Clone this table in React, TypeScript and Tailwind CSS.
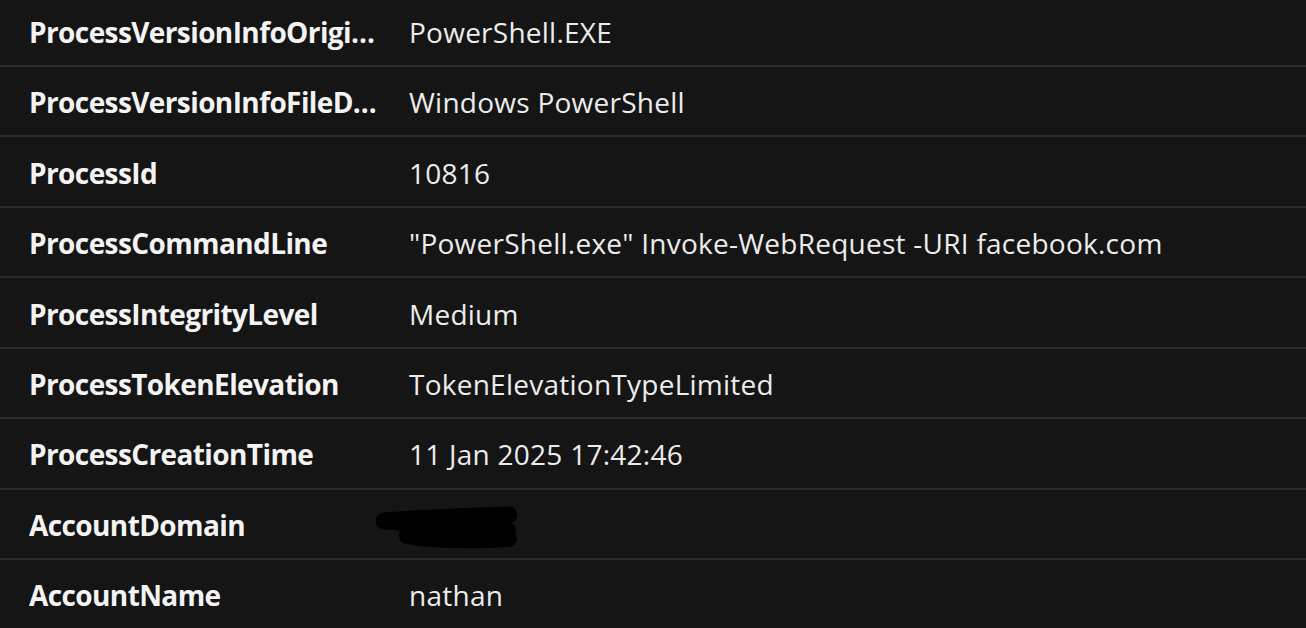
import React from 'react';

const rows: { key: string; value: string | null }[] = [
    { key: 'ProcessVersionInfoOriginalFileName', value: 'PowerShell.EXE' },
    { key: 'ProcessVersionInfoFileDescription', value: 'Windows PowerShell' },
    { key: 'ProcessId', value: '10816' },
    { key: 'ProcessCommandLine', value: '"PowerShell.exe" Invoke-WebRequest -URI facebook.com' },
    { key: 'ProcessIntegrityLevel', value: 'Medium' },
    { key: 'ProcessTokenElevation', value: 'TokenElevationTypeLimited' },
    { key: 'ProcessCreationTime', value: '11 Jan 2025 17:42:46' },
    { key: 'AccountDomain', value: null },
    { key: 'AccountName', value: 'nathan' },
];

// redacted value: a couple of thick marker strokes
const Scribble = () => (
    <svg width="150" height="44" viewBox="0 0 150 44" className="-ml-[35px] mt-[6px] block">
        <path d="M10 15 C 50 12, 100 10, 135 9" stroke="#000" strokeWidth="17" strokeLinecap="round" fill="none" />
        <path d="M12 16 L 60 22 L 135 24" stroke="#000" strokeWidth="14" strokeLinecap="round" fill="none" />
        <path d="M33 30 C 60 35, 100 35, 135 33" stroke="#000" strokeWidth="16" strokeLinecap="round" fill="none" />
    </svg>
);

const App = () => {
    return (
        <div className="w-[1306px] h-[628px] overflow-hidden bg-[#151515]" style={{ fontFamily: '"Open Sans", "Noto Sans", sans-serif' }}>
            <div className="-mt-[3.4px]">
                {rows.map((row) => (
                    <div key={row.key} className="flex items-center h-[70.43px] border-b-2 border-[#2b2b2b] pt-[2px]">
                        <div className="w-[410px] shrink-0 pl-[29px]">
                            <div className="w-[350px] truncate font-bold text-[28px] text-[#f3f3f3] tracking-[-0.6px]">{row.key}</div>
                        </div>
                        <div className="text-[28px] text-[#ececec] tracking-[0.25px] -ml-[1px]">
                            {row.value ?? <Scribble />}
                        </div>
                    </div>
                ))}
            </div>
        </div>
    );
};

export default App;
